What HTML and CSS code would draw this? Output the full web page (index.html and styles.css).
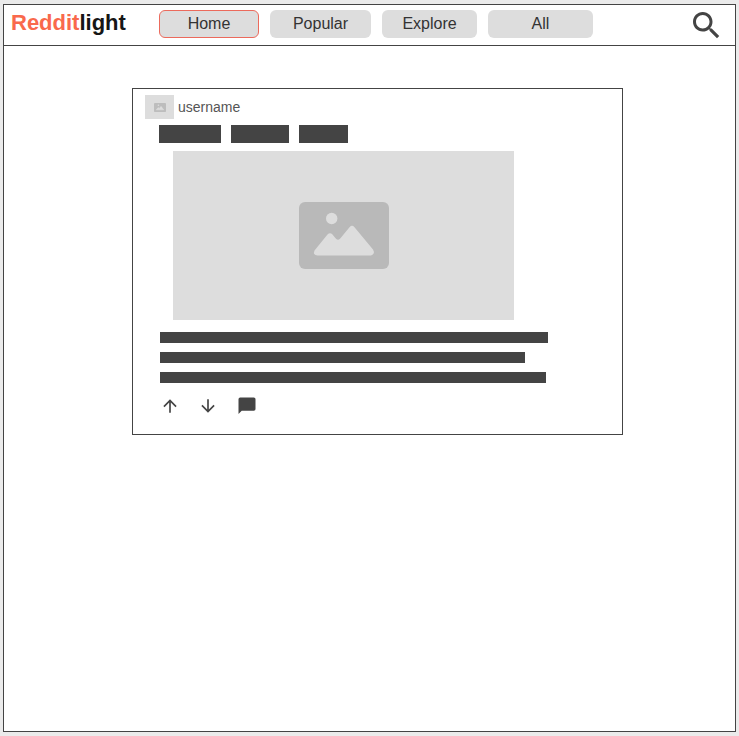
FILE: index.html
```html
<!DOCTYPE html>
<html lang="en">
<head>
<meta charset="utf-8">
<meta name="viewport" content="width=device-width, initial-scale=1">
<title>Redditlight</title>
<link rel="stylesheet" href="styles.css">
</head>
<body>
<div class="frame">
  <header class="topbar">
    <a class="brand" href="#"><span class="brand-accent">Reddit</span>light</a>
    <nav class="tabs" aria-label="Feeds">
      <button class="tab tab-home active" type="button">Home</button>
      <button class="tab tab-popular" type="button">Popular</button>
      <button class="tab tab-explore" type="button">Explore</button>
      <button class="tab tab-all" type="button">All</button>
    </nav>
    <button class="icon-button search" type="button" aria-label="Search">
      <svg width="27" height="27" viewBox="3 3 18 18" fill="currentColor"><path d="M15.500 14h-.79l-.28-.27C15.410 12.590 16 11.110 16 9.500 16 5.910 13.090 3 9.500 3S3 5.910 3 9.500 5.910 16 9.500 16c1.610 0 3.090-.59 4.230-1.570l.27.28v.79l5 4.990L20.490 19l-4.990-5zm-6 0C7.010 14 5 11.990 5 9.500S7.010 5 9.500 5 14 7.010 14 9.500 11.990 14 9.500 14z"/></svg>
    </button>
  </header>
  <main>
    <article class="post">
      <div class="author">
        <span class="avatar"><svg width="12" height="9" viewBox="0 0 90 67"><rect width="90" height="67" rx="6" fill="#bdbdbd"/><circle cx="33" cy="17" r="6" fill="#ddd"/><path d="M17 51L31 34L39 41L53 25L73 51Z" fill="#ddd" stroke="#ddd" stroke-width="4" stroke-linejoin="round"/></svg></span>
        <a class="username" href="#">username</a>
      </div>
      <div class="title">
        <span class="word word-1"></span>
        <span class="word word-2"></span>
        <span class="word word-3"></span>
      </div>
      <div class="media">
        <svg width="90" height="67" viewBox="0 0 90 67"><rect width="90" height="67" rx="6" fill="#b9b9b9"/><circle cx="32.700" cy="16.500" r="5.700" fill="#ddd"/><path d="M15.500 48.500L28.500 32.500Q31 29.800 33.500 32.500L37 36.700Q39 39 41 36.700L50.500 25.200Q53 22.400 55.500 25.200L74 47.500Q76.500 52 72 53.500H18.500Q13.500 53 15.500 48.500Z" fill="#ddd"/></svg>
      </div>
      <div class="body">
        <span class="line line-1"></span>
        <span class="line line-2"></span>
        <span class="line line-3"></span>
      </div>
      <div class="actions">
        <button class="icon-button" type="button" aria-label="Upvote"><svg width="20" height="20" viewBox="0 0 24 24" fill="currentColor"><path d="M4 12l1.410 1.410L11 7.830V20h2V7.830l5.580 5.590L20 12l-8-8-8 8z"/></svg></button>
        <button class="icon-button" type="button" aria-label="Downvote"><svg width="20" height="20" viewBox="0 0 24 24" fill="currentColor"><path d="M20 12l-1.410-1.410L13 16.170V4h-2v12.170l-5.580-5.590L4 12l8 8 8-8z"/></svg></button>
        <button class="icon-button" type="button" aria-label="Comments"><svg width="20" height="20" viewBox="0 0 20 20" fill="currentColor"><path d="M4.200 1.500H17.800Q19.500 1.500 19.500 3.200V13Q19.500 14.700 17.800 14.700H5.700L2.500 17.900V3.200Q2.500 1.500 4.200 1.500Z"/></svg></button>
      </div>
    </article>
  </main>
</div>
</body>
</html>
```
FILE: styles.css
```css
* {
  box-sizing: border-box;
}

body {
  margin: 0;
  padding: 4px 3px;
  min-height: 100vh;
  display: flex;
  background: #ebebeb;
  color: #333;
  font-family: "Liberation Sans", Arial, sans-serif;
  font-size: 16px;
}

.frame {
  flex: 1;
  border: 1px solid #444;
  background: #fff;
}

.topbar {
  display: flex;
  align-items: flex-start;
  height: 41px;
  padding: 5px 15px 0 7px;
  border-bottom: 1px solid #444;
}

.brand {
  width: 148px;
  flex-shrink: 0;
  color: #161616;
  font-size: 22px;
  font-weight: bold;
  line-height: 26px;
  text-decoration: none;
}

.brand-accent {
  color: #f9694c;
}

.tabs {
  display: flex;
  gap: 11px;
}

.tab {
  height: 28px;
  padding: 0;
  border: 1px solid transparent;
  border-radius: 6px;
  background: #ddd;
  color: #333;
  font: inherit;
}

.tab.active {
  border-color: #ec6a5c;
}

.tab-home {
  width: 100px;
}

.tab-popular {
  width: 101px;
}

.tab-explore {
  width: 95px;
}

.tab-all {
  width: 105px;
}

.icon-button {
  display: flex;
  padding: 0;
  border: 0;
  background: none;
  color: #444;
}

.search {
  margin-left: auto;
  padding-top: 2px;
}

.post {
  margin: 42px 112px 0 128px;
  padding: 6px 12px 18px;
  border: 1px solid #444;
}

.author {
  display: flex;
  align-items: center;
  gap: 4px;
}

.avatar {
  display: flex;
  align-items: center;
  justify-content: center;
  width: 29px;
  height: 24px;
  background: #ddd;
}

.username {
  color: #555;
  font-size: 14px;
  text-decoration: none;
}

.title {
  display: flex;
  gap: 10px;
  margin: 6px 0 8px 14px;
}

.word {
  height: 18px;
  background: #444;
}

.word-1 {
  width: 62px;
}

.word-2 {
  width: 58px;
}

.word-3 {
  width: 49px;
}

.media {
  display: flex;
  align-items: center;
  justify-content: center;
  height: 169px;
  margin: 0 96px 0 28px;
  background: #ddd;
}

.body {
  display: flex;
  flex-direction: column;
  gap: 9px;
  margin: 12px 62px 0 15px;
}

.line {
  height: 11px;
  background: #444;
}

.line-1 {
  width: 100%;
}

.line-2 {
  width: 94%;
}

.line-3 {
  width: 99.5%;
}

.actions {
  display: flex;
  gap: 18px;
  margin: 13px 0 0 15px;
}
```
